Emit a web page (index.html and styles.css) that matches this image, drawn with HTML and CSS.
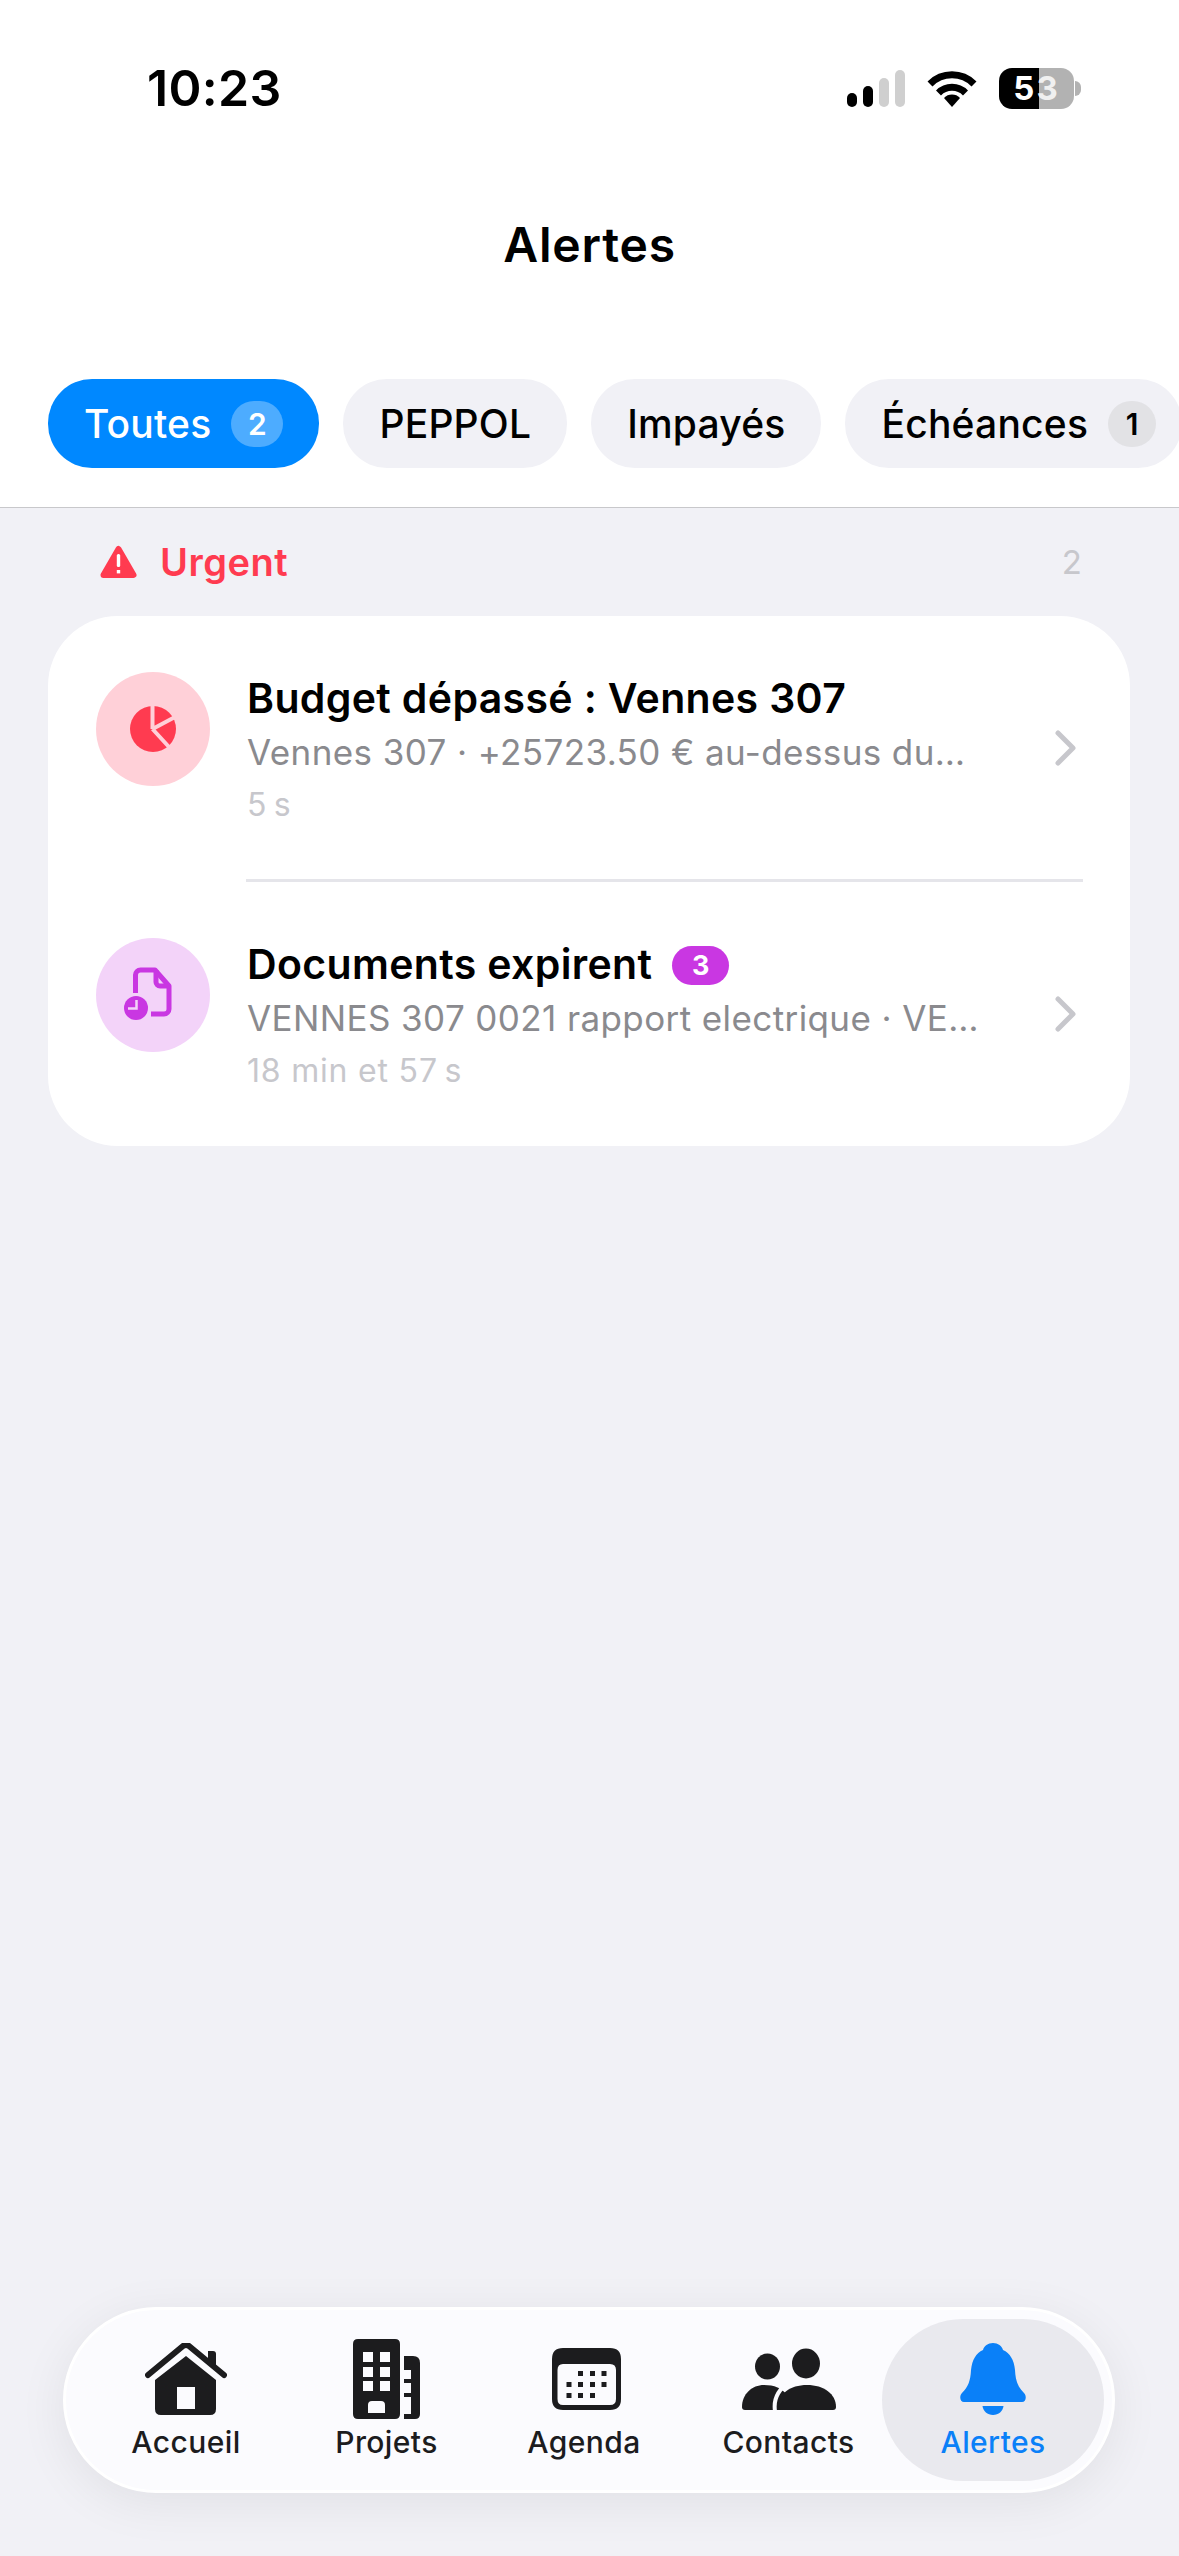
FILE: index.html
```html
<!DOCTYPE html>
<html lang="fr">
  <head>
    <meta charset="UTF-8" />
    <meta name="viewport" content="width=device-width, initial-scale=1.0" />
    <title>Alertes</title>
    <link rel="stylesheet" href="styles.css">
  </head>
  <body>
    <header class="top">
      <!-- Status bar -->
      <div class="status-bar">
        <span class="time">10:23</span>
        <div class="status-icons">
          <div class="signal">
            <i class="bar bar-1"></i>
            <i class="bar bar-2"></i>
            <i class="bar bar-3 off"></i>
            <i class="bar bar-4 off"></i>
          </div>
          <svg class="wifi" width="50" height="37" viewBox="0 0 50 37">
            <path d="M3 14 A31 31 0 0 1 47 14" fill="none" stroke="#000" stroke-width="7" />
            <path d="M11.5 23 A19 19 0 0 1 38.500 23" fill="none" stroke="#000" stroke-width="7" />
            <path d="M25 37 L17 28 A11 11 0 0 1 33 28 Z" fill="#000" />
          </svg>
          <div class="battery"><span>5</span><span class="dim">3</span></div>
        </div>
      </div>

      <h1 class="page-title">Alertes</h1>

      <!-- Filters -->
      <nav class="filters">
        <button class="pill active">Toutes <span class="count">2</span></button>
        <button class="pill">PEPPOL</button>
        <button class="pill">Impayés</button>
        <button class="pill">Échéances <span class="count">1</span></button>
      </nav>
    </header>

    <main class="content">
      <div class="section-head">
        <div class="section-title">
          <svg width="37" height="34" viewBox="0 0 37 34">
            <path d="M18.500 4 L33.500 30 H3.500 Z" fill="#ff3b50" stroke="#ff3b50" stroke-width="6" stroke-linejoin="round" />
            <rect x="16.800" y="9" width="3.400" height="13" rx="1.500" fill="#fff" />
            <rect x="16.800" y="25" width="3.400" height="3.400" fill="#fff" />
          </svg>
          <span>Urgent</span>
        </div>
        <span class="section-count">2</span>
      </div>

      <section class="card">
        <div class="alert-row">
          <div class="alert-icon red">
            <svg width="60" height="60" viewBox="0 0 60 60">
              <circle cx="30" cy="30" r="23" fill="#ff3b50" />
              <path d="M29.500 30 V4 M29.500 30 L52 18 M29.500 30 L46 48" fill="none" stroke="#ffd0d8" stroke-width="4" />
            </svg>
          </div>
          <div class="alert-text">
            <div class="alert-title">Budget dépassé : Vennes 307</div>
            <div class="alert-sub">Vennes 307 · +25723.50 € au-dessus du…</div>
            <div class="alert-time">5&#8239;s</div>
          </div>
          <svg class="chevron" width="21" height="36" viewBox="0 0 21 36">
            <path d="M3 3 L18 18 L3 33" fill="none" stroke="#c7c7cc" stroke-width="5" stroke-linecap="round" stroke-linejoin="round" />
          </svg>
        </div>

        <div class="row-divider"></div>

        <div class="alert-row">
          <div class="alert-icon purple">
            <svg width="80" height="80" viewBox="0 0 80 80">
              <path d="M22.500 38 V20 a5 5 0 0 1 5-5 H42 L56 31 V54 a5 5 0 0 1-5 5 H38" fill="none" stroke="#c937e2" stroke-width="5" stroke-linejoin="round" />
              <path d="M43 15 V27 a4 4 0 0 0 4 4 H56" fill="none" stroke="#c937e2" stroke-width="5" />
              <circle cx="23" cy="53" r="12" fill="#c937e2" />
              <path d="M23.500 45 V53.500 H15" fill="none" stroke="#f3d3f9" stroke-width="2.500" />
            </svg>
          </div>
          <div class="alert-text">
            <div class="alert-title">Documents expirent <span class="title-badge">3</span></div>
            <div class="alert-sub">VENNES 307 0021 rapport electrique · VE…</div>
            <div class="alert-time">18 min et 57&#8239;s</div>
          </div>
          <svg class="chevron" width="21" height="36" viewBox="0 0 21 36">
            <path d="M3 3 L18 18 L3 33" fill="none" stroke="#c7c7cc" stroke-width="5" stroke-linecap="round" stroke-linejoin="round" />
          </svg>
        </div>
      </section>
    </main>

    <!-- Bottom tabs -->
    <nav class="tabbar">
      <a class="tab">
        <span class="tab-icon">
          <svg width="82" height="72" viewBox="0 0 82 72">
            <path d="M3 32 L38 3 Q41 1 44 3 L79 32" fill="none" stroke="#1c1c1e" stroke-width="6" stroke-linecap="round" stroke-linejoin="round" />
            <path d="M63 8 H68 Q71 8 71 11 V23 L63 16 Z" fill="#1c1c1e" />
            <path fill-rule="evenodd" d="M10 37 L41 13 L71 37 V66 Q71 72 65 72 H16 Q10 72 10 66 Z M32 44 V66 H50 V44 Z" fill="#1c1c1e" />
          </svg>
        </span>
        <span class="tab-label">Accueil</span>
      </a>
      <a class="tab">
        <span class="tab-icon">
          <svg width="68" height="80" viewBox="0 0 68 80">
            <path fill-rule="evenodd" d="M5 0 H42 Q47 0 47 5 V75 Q47 80 42 80 H5 Q0 80 0 75 V5 Q0 0 5 0 Z M10 13 V23 H20 V13 Z M27 13 V23 H37 V13 Z M10 28 V38 H20 V28 Z M27 28 V38 H37 V28 Z M10 42 V52 H20 V42 Z M27 42 V52 H37 V42 Z M19 62 Q15 62 15 66 V74 H32 V66 Q32 62 28 62 Z" fill="#1c1c1e" />
            <path d="M51 17 H60 Q67 17 67 24 V75 Q67 80 62 80 H51 V75 H58 V58 H51 V54 H58 V44 H51 V40 H58 V31 H51 Z" fill="#1c1c1e" />
          </svg>
        </span>
        <span class="tab-label">Projets</span>
      </a>
      <a class="tab">
        <span class="tab-icon calendar">
          <svg width="69" height="62" viewBox="0 0 69 62">
            <path fill-rule="evenodd" d="M11 0 H58 Q69 0 69 11 V51 Q69 62 58 62 H11 Q0 62 0 51 V11 Q0 0 11 0 Z M11 16 Q5.500 16 5.500 22 V51 Q5.500 57 11 57 H58 Q64 57 64 51 V22 Q64 16 58 16 Z" fill="#1c1c1e" />
            <g fill="#1c1c1e">
              <rect x="26" y="23" width="5" height="5" /><rect x="38" y="23" width="5" height="5" /><rect x="49.500" y="23" width="5" height="5" />
              <rect x="14.500" y="34" width="5" height="5" /><rect x="26" y="34" width="5" height="5" /><rect x="38" y="34" width="5" height="5" /><rect x="49.500" y="34" width="5" height="5" />
              <rect x="14.500" y="45" width="5" height="5" /><rect x="26" y="45" width="5" height="5" /><rect x="38" y="45" width="5" height="5" />
            </g>
          </svg>
        </span>
        <span class="tab-label">Agenda</span>
      </a>
      <a class="tab">
        <span class="tab-icon">
          <svg width="94" height="63" viewBox="0 0 94 63">
            <ellipse cx="25.500" cy="18.500" rx="12.500" ry="13" fill="#1c1c1e" />
            <ellipse cx="64" cy="15.500" rx="14" ry="15" fill="#1c1c1e" />
            <path d="M3 62 Q0 62 0 59 C0 46 10 37 22 37 C32 37 40 40 46 48 L40 62 Z" fill="#1c1c1e" />
            <path d="M39 62 Q36 62 36 59 C36 46 48 37 65 37 C82 37 94 46 94 59 Q94 62 91 62 Z" fill="#1c1c1e" />
            <path d="M33 63 C31 50 38 38 50 34" fill="none" stroke="#fbfbfe" stroke-width="4" />
          </svg>
        </span>
        <span class="tab-label">Contacts</span>
      </a>
      <a class="tab active">
        <span class="tab-icon">
          <svg width="66" height="72" viewBox="0 0 66 72">
            <path d="M33 0 C38 0 42 3 43 7 C50 10 54 17 55 27 C55.500 38 58 44 64 50 C67 53 66 59 62 59 H4 C0 59 -1 53 2 50 C8 44 10.500 38 11 27 C12 17 16 10 23 7 C24 3 28 0 33 0 Z" fill="#0a80f8" />
            <path d="M22.500 63 H43.500 C43 68 38.500 72 33 72 C27.500 72 23 68 22.500 63 Z" fill="#0a80f8" />
          </svg>
        </span>
        <span class="tab-label">Alertes</span>
      </a>
    </nav>
  </body>
</html>
```

FILE: styles.css
```css
* {
  box-sizing: border-box;
}

body {
  margin: 0;
  height: 100vh;
  display: flex;
  flex-direction: column;
  overflow: hidden;
  font-family: Inter, "Liberation Sans", sans-serif;
  background-color: #f1f1f6;
  color: #000;
}

.top {
  background-color: #fff;
  border-bottom: 1px solid #c8c8cb;
}

/* Status bar */
.status-bar {
  height: 176px;
  display: flex;
  justify-content: space-between;
  align-items: center;
  padding: 0 98px 0 147px;
}

.time {
  font-size: 50px;
  font-weight: 600;
  letter-spacing: 0.3px;
}

.status-icons {
  display: flex;
  align-items: center;
  gap: 22px;
}

.signal {
  display: flex;
  align-items: flex-end;
  gap: 6px;
  height: 37px;
}

.bar {
  display: block;
  width: 10px;
  border-radius: 5px;
  background-color: #000;
}

.bar.off {
  background-color: #cfcfcf;
}

.bar-1 { height: 14px; }
.bar-2 { height: 21px; }
.bar-3 { height: 29px; }
.bar-4 { height: 37px; }

.battery {
  position: relative;
  width: 75px;
  height: 41px;
  border-radius: 13px;
  margin-right: 7px;
  display: flex;
  justify-content: center;
  align-items: center;
  font-size: 33px;
  font-weight: 700;
  letter-spacing: 2px;
  color: #fff;
  background: linear-gradient(to right, #000 53%, #b2b2b2 53%);
}

.battery .dim {
  color: #f0f0f0;
}

.battery::after {
  content: "";
  position: absolute;
  left: 76px;
  top: 13px;
  width: 6px;
  height: 15px;
  border-radius: 0 8px 8px 0;
  background-color: #b2b2b2;
}

.page-title {
  margin: 0;
  height: 138px;
  line-height: 138px;
  text-align: center;
  font-size: 48px;
  font-weight: 580;
  letter-spacing: 0.8px;
}

/* Filters */
.filters {
  display: flex;
  gap: 24px;
  padding: 65px 0 39px 48px;
  overflow: hidden;
}

.pill {
  flex: none;
  height: 89px;
  display: flex;
  align-items: center;
  gap: 20px;
  padding: 0 36px;
  border: none;
  border-radius: 44px;
  background-color: #f1f1f6;
  color: #000;
  font-family: inherit;
  font-size: 39px;
  font-weight: 500;
  letter-spacing: 0.2px;
}

.pill.active {
  background-color: #0088ff;
  color: #fff;
}

.count {
  min-width: 48px;
  height: 46px;
  padding: 0 12px;
  border-radius: 23px;
  background-color: #e2e2e5;
  font-size: 30px;
  font-weight: 600;
  line-height: 46px;
  text-align: center;
}

.pill.active .count {
  min-width: 52px;
  background-color: #4dacff;
}

.pill:last-child {
  padding-right: 26px;
}

/* List */
.content {
  flex: 1;
  padding: 0 49px 0 48px;
}

.section-head {
  height: 108px;
  display: flex;
  justify-content: space-between;
  align-items: center;
  padding: 0 48px 0 52px;
}

.section-title {
  display: flex;
  align-items: center;
  gap: 23px;
  font-size: 38px;
  font-weight: 600;
  letter-spacing: 0.5px;
  color: #ff3b50;
}

.section-count {
  font-size: 33px;
  color: #c7c7cc;
}

.card {
  background-color: #fff;
  border-radius: 70px;
}

.alert-row {
  height: 264px;
  display: flex;
  align-items: flex-start;
  padding: 56px 54px 0 48px;
}

.alert-row:first-child {
  height: 263px;
}

.alert-icon {
  flex: none;
  width: 114px;
  height: 114px;
  margin-right: 37px;
  border-radius: 50%;
  display: flex;
  justify-content: center;
  align-items: center;
}

.alert-icon.red {
  background-color: #ffd0d8;
}

.alert-icon.purple {
  background-color: #f3d3f9;
}

.alert-text {
  flex: 1;
  min-width: 0;
}

.alert-title {
  display: flex;
  align-items: center;
  height: 52px;
  font-size: 41px;
  font-weight: 600;
  letter-spacing: 0.35px;
  white-space: nowrap;
}

.title-badge {
  margin: 3px 0 0 20px;
  width: 57px;
  height: 39px;
  border-radius: 20px;
  background-color: #c937e2;
  color: #fff;
  font-size: 27px;
  font-weight: 700;
  line-height: 39px;
  text-align: center;
}

.alert-sub {
  margin-top: 4px;
  font-size: 35px;
  line-height: 48px;
  letter-spacing: 0.4px;
  color: #8a8a8e;
  white-space: nowrap;
}

.alert-time {
  margin-top: 9px;
  font-size: 32px;
  line-height: 40px;
  letter-spacing: 0.8px;
  color: #c7c7cc;
}

.chevron {
  flex: none;
  align-self: center;
  margin-top: -56px;
}

.row-divider {
  height: 3px;
  margin: 0 47px 0 198px;
  background-color: #e5e5ea;
}

.tabbar {
  height: 186px;
  margin: 0 64px 63px 63px;
  padding: 9px 18px;
  display: grid;
  grid-template-columns: 204px 197px 198px 211px 200px;
  border: 3px solid #fff;
  border-radius: 93px;
  background-color: #fbfbfe;
  box-shadow: 0 10px 50px rgba(0, 0, 0, 0.07);
}

.tab {
  display: flex;
  flex-direction: column;
  align-items: center;
  padding-top: 20px;
  color: #1c1c1e;
}

.tab.active {
  margin: 0 -10px 0 -12px;
  border-radius: 81px;
  background-color: #e9e9ee;
  color: #0a80f8;
}

.tab-icon {
  height: 80px;
  display: flex;
  align-items: center;
}

.tab-icon.calendar {
  margin-left: 5px;
}

.tab-label {
  margin-top: 5px;
  font-size: 30px;
  font-weight: 450;
  line-height: 36px;
  letter-spacing: 0.4px;
}
```
